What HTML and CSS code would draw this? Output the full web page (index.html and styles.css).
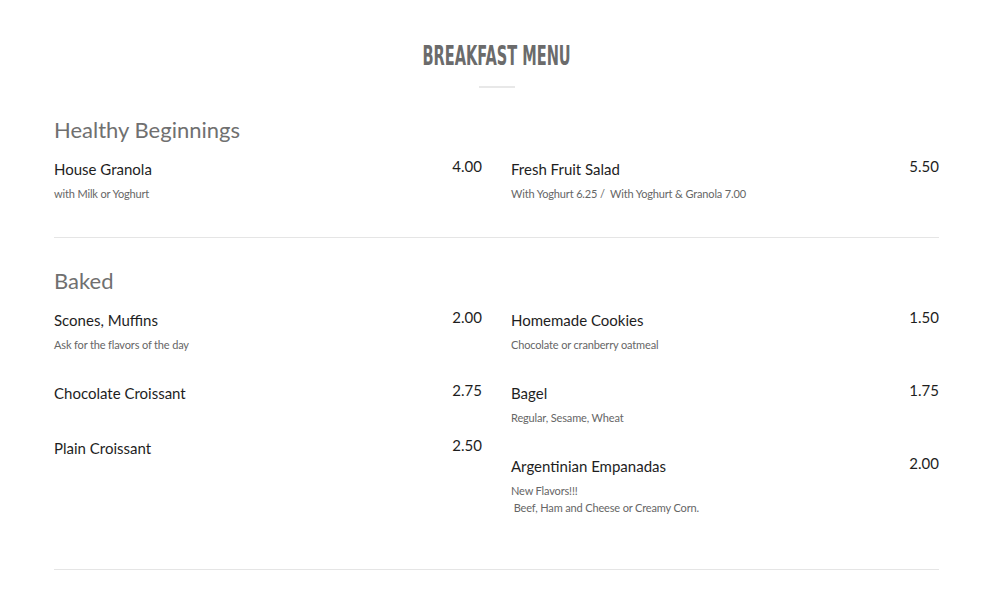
FILE: index.html
```html
<!DOCTYPE html>
<html>
<head>
<meta charset="utf-8">
<link rel="stylesheet" href="styles.css">
</head>
<body>
<div class="page">
  <header class="head">
    <h1 class="title">BREAKFAST MENU</h1>
    <div class="rule"></div>
  </header>

  <section class="section">
    <h2 class="sec-title">Healthy Beginnings</h2>
    <div class="cols">
      <div class="col">
        <div class="item">
          <div class="row"><span class="name">House Granola</span><span class="price">4.00</span></div>
          <div class="desc">with Milk or Yoghurt</div>
        </div>
      </div>
      <div class="col">
        <div class="item">
          <div class="row"><span class="name">Fresh Fruit Salad</span><span class="price">5.50</span></div>
          <div class="desc">With Yoghurt 6.25 /&nbsp; With Yoghurt &amp; Granola 7.00</div>
        </div>
      </div>
    </div>
  </section>

  <section class="section">
    <h2 class="sec-title">Baked</h2>
    <div class="cols">
      <div class="col">
        <div class="item">
          <div class="row"><span class="name">Scones, Muffins</span><span class="price">2.00</span></div>
          <div class="desc">Ask for the flavors of the day</div>
        </div>
        <div class="item">
          <div class="row"><span class="name">Chocolate Croissant</span><span class="price">2.75</span></div>
          <div class="desc"></div>
        </div>
        <div class="item">
          <div class="row"><span class="name">Plain Croissant</span><span class="price">2.50</span></div>
          <div class="desc"></div>
        </div>
      </div>
      <div class="col">
        <div class="item">
          <div class="row"><span class="name">Homemade Cookies</span><span class="price">1.50</span></div>
          <div class="desc">Chocolate or cranberry oatmeal</div>
        </div>
        <div class="item">
          <div class="row"><span class="name">Bagel</span><span class="price">1.75</span></div>
          <div class="desc">Regular, Sesame, Wheat</div>
        </div>
        <div class="item">
          <div class="row"><span class="name">Argentinian Empanadas</span><span class="price">2.00</span></div>
          <div class="desc">New Flavors!!!<br>&nbsp;Beef, Ham and Cheese or Creamy Corn.</div>
        </div>
      </div>
    </div>
  </section>
</div>
</body>
</html>
```

FILE: styles.css
```css
html, body {
  margin: 0;
  padding: 0;
  background: #ffffff;
}
body {
  font-family: Lato, "Open Sans", sans-serif;
  color: #222222;
}
.page {
  width: 885px;
  margin-left: 54px;
}
.head {
  padding-top: 40px;
  display: flex;
  flex-direction: column;
  align-items: center;
}
.title {
  margin: 0;
  font-family: "DejaVu Sans Condensed", "DejaVu Sans", sans-serif;
  font-weight: bold;
  font-size: 27px;
  line-height: 32px;
  color: #6b6b6b;
  transform: scaleX(0.6);
  white-space: nowrap;
}
.rule {
  width: 36px;
  height: 2px;
  background: #e8e8e8;
  margin-top: 14px;
}
.section {
  border-bottom: 1px solid #e5e5e5;
  padding-top: 28px;
  padding-bottom: 6px;
}
.section + .section {
  padding-top: 29px;
}
.section:last-child {
  padding-bottom: 24px;
}
.sec-title {
  margin: 0 0 14px 0;
  font-weight: normal;
  font-size: 22px;
  line-height: 28px;
  color: #707070;
}
.cols {
  display: grid;
  grid-template-columns: 428px 428px;
  column-gap: 29px;
}
.item {
  margin-bottom: 29px;
}
.row {
  display: flex;
  justify-content: space-between;
  align-items: flex-start;
  line-height: 22px;
}
.name {
  font-size: 15px;
  color: #1e1e1e;
}
.price {
  font-size: 15px;
  color: #1e1e1e;
  margin-top: -3px;
}
.desc {
  margin-top: 5px;
  font-size: 11px;
  line-height: 17px;
  letter-spacing: -0.15px;
  color: #666666;
}
.desc:empty {
  margin-top: 0;
  height: 4px;
}
```
